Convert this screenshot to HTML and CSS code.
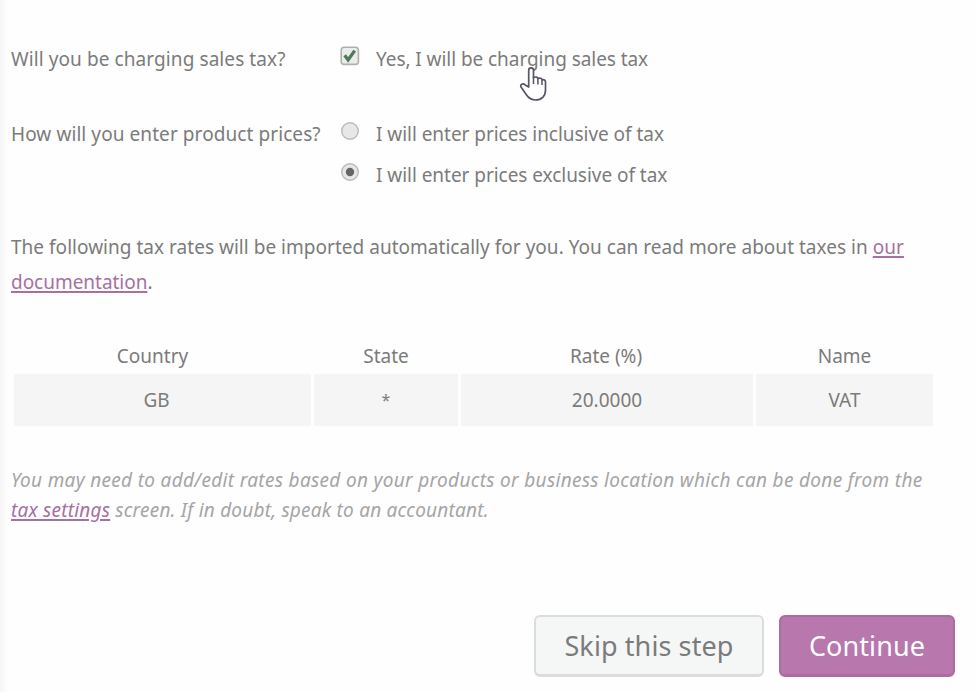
FILE: index.html
```html
<!DOCTYPE html>
<html lang="en">
<head>
<meta charset="utf-8">
<title>Tax setup</title>
<link rel="stylesheet" href="styles.css">
</head>
<body>
<main class="setup">
  <form class="options">
    <div class="question q-tax"><span class="label"><span class="t t-charge">Will you be charging sales tax?</span></span>
      <label class="choice">
        <svg class="control" viewBox="0 0 20 20"><rect x="1.2" y="1.2" width="17.2" height="17.2" rx="3" fill="#ececec" stroke="#b0b0b0" stroke-width="1.6"/><path d="M4.7 9.3l3.4 4.6 6.6-9.3" fill="none" stroke="#4d7a59" stroke-width="3.3"/></svg>
        <span class="t t-yes">Yes, I will be charging sales tax</span>
      </label>
    </div>
    <div class="question q-prices"><span class="label"><span class="t t-how">How will you enter product prices?</span></span>
      <div class="choices">
        <label class="choice">
          <svg class="control" viewBox="0 0 20 20"><circle cx="10" cy="10" r="8.3" fill="#e7e7e7" stroke="#bababa" stroke-width="1.4"/></svg>
          <span class="t t-inc">I will enter prices inclusive of tax</span>
        </label>
        <label class="choice">
          <svg class="control" viewBox="0 0 20 20"><circle cx="10" cy="10" r="8.3" fill="#e7e7e7" stroke="#bababa" stroke-width="1.4"/><circle cx="10" cy="10" r="4.2" fill="#666"/></svg>
          <span class="t t-exc">I will enter prices exclusive of tax</span>
        </label>
      </div>
    </div>
  </form>
  <p class="intro"><span class="t t-intro">The following tax rates will be imported automatically for you. You can read more about taxes in <a href="#">our</a></span><br><span class="t t-doc"><a href="#">documentation</a>.</span></p>
  <div class="rates">
    <span class="head country">Country</span><span class="head">State</span><span class="head rate">Rate (%)</span><span class="head">Name</span>
    <span class="cell code">GB</span><span class="cell star">*</span><span class="cell">20.0000</span><span class="cell">VAT</span>
  </div>
  <p class="note"><span class="t t-note1">You may need to add/edit rates based on your products or business location which can be done from the</span><br><span class="t t-note2"><a href="#">tax settings</a> screen. If in doubt, speak to an accountant.</span></p>
  <div class="actions">
    <button class="button" type="button"><span class="t t-skip">Skip this step</span></button>
    <button class="button primary" type="button"><span class="t t-cont">Continue</span></button>
  </div>
</main>
<svg class="pointer" viewBox="0 0 30 36"><path d="M9.7 21V4.3c0-3.2 4.8-3.2 4.8 0v7.2c2-1 4.2-.4 4.5 1 1.8-.9 3.7-.2 4 1.3 2-.5 3.5.5 3.5 2.2v8.2c0 5.8-4 9.8-9.8 9.8-4.7 0-7.2-2-9.5-5.5l-5-7.2c-1.5-2.7 1.5-4.5 4-2.4z" fill="#fff" stroke="#555564" stroke-width="1.7" stroke-linejoin="round"/><path d="M14.5 11v7M18.9 12.5v6M23 14v5" stroke="#555564" stroke-width="1.5"/></svg>
</body>
</html>
```
FILE: styles.css
```css
* { box-sizing: border-box; }
body { margin: 0; width: 977px; height: 692px; overflow: hidden; background: #fefefe; color: #7b7b7b; font: 19px/34px "Noto Sans", "Open Sans", sans-serif; }
.setup { height: 692px; padding: 42px 22px 0 11px; background: linear-gradient(90deg, #f5f5f5, #fefefe 8px); }
.t { white-space: nowrap; }
.t-charge { letter-spacing: .085px; }
.t-yes { letter-spacing: -.06px; }
.t-how { letter-spacing: .08px; }
.t-inc, .t-exc { letter-spacing: -.04px; }
.t-intro { letter-spacing: .025px; }
.t-doc { letter-spacing: -.03px; }
.t-note1 { letter-spacing: .323px; }
.t-note2 { letter-spacing: .215px; }
.t-skip { letter-spacing: .1px; }
.t-cont { letter-spacing: .1px; }
a { color: #a471a0; text-decoration-thickness: 1.5px; text-underline-offset: 2px; }
.question { display: flex; }
.q-tax { height: 75px; }
.q-prices { height: 113px; }
.label { width: 329px; flex: none; }
.choice { display: flex; height: 41px; }
.control { width: 20px; height: 20px; margin: 4px 16px 0 0; flex: none; }
.intro { margin: 0; height: 108px; line-height: 35px; }
.rates { display: grid; grid-template-columns: 297px 144px 292px 177px; grid-template-rows: 36px 52px; column-gap: 3px; margin-left: 3px; text-align: center; }
.head { line-height: 36px; }
.country { padding-right: 20px; }
.rate { padding-right: 2px; }
.cell { background: #f5f5f5; line-height: 52px; }
.code { padding-right: 12px; }
.star { font-size: 16px; }
.note { margin: 39px 0 0; height: 150px; color: #a5a5a5; font-style: italic; line-height: 30px; }
.actions { display: flex; justify-content: flex-end; gap: 15px; }
.button { width: 230px; height: 62px; border: 2px solid #dcdcdc; border-bottom-width: 3px; border-radius: 6px; background: #f5f7f7; color: #7b7b7b; font: 27px/1 "Noto Sans", "Open Sans", sans-serif; padding: 0; }
.primary { width: 176px; background: #b877ad; border-color: #ac6ca2; color: #fff; }
.pointer { position: absolute; left: 519px; top: 66px; width: 30px; height: 36px; }
```
